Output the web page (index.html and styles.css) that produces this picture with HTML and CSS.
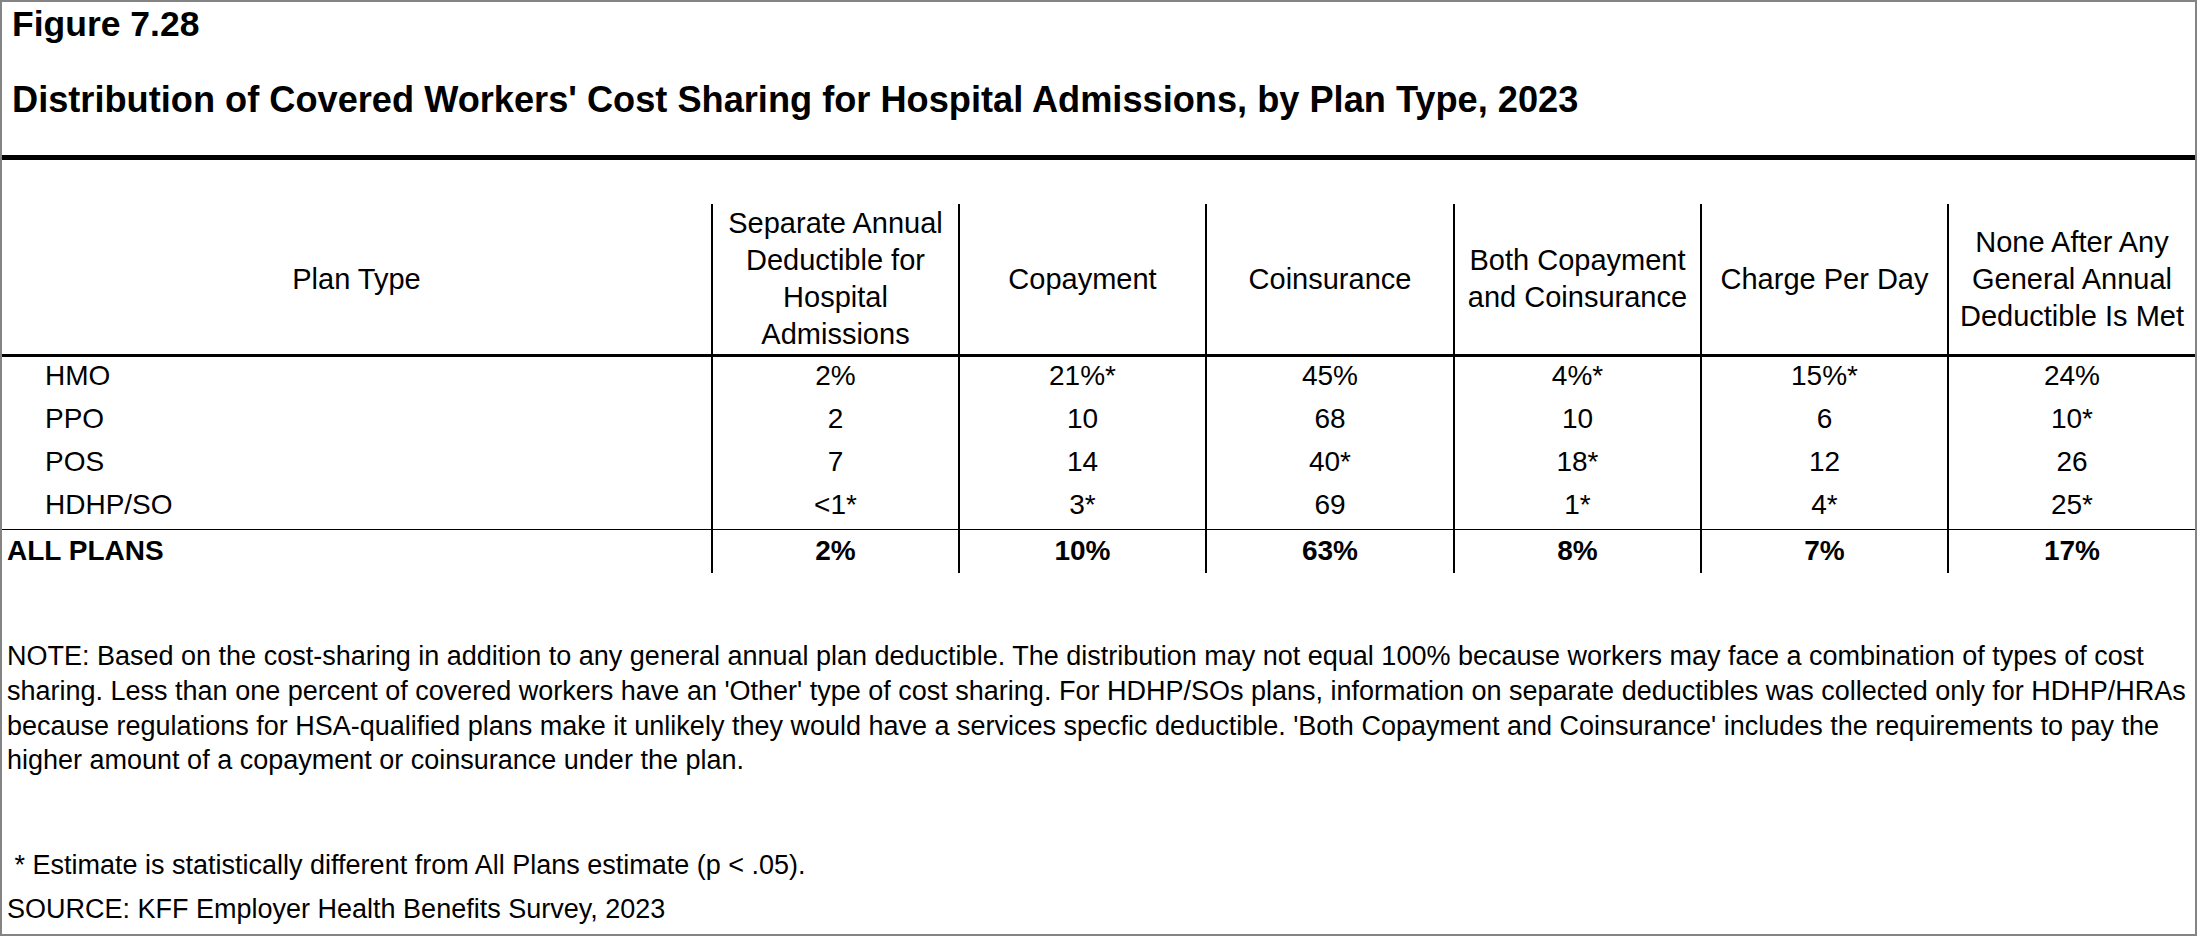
FILE: index.html
```html
<!DOCTYPE html>
<html lang="en">
<head>
<meta charset="utf-8">
<title>Figure 7.28</title>
<link rel="stylesheet" href="styles.css">
</head>
<body>
<div class="frame">
  <header class="head">
    <div class="fig">Figure 7.28</div>
    <h1 class="title">Distribution of Covered Workers' Cost Sharing for Hospital Admissions, by Plan Type, 2023</h1>
  </header>

  <div class="tbl">
    <div class="hc first">Plan Type</div>
    <div class="hc col">Separate Annual Deductible for Hospital Admissions</div>
    <div class="hc col">Copayment</div>
    <div class="hc col">Coinsurance</div>
    <div class="hc col">Both Copayment and Coinsurance</div>
    <div class="hc col">Charge Per Day</div>
    <div class="hc col">None After Any General Annual Deductible Is Met</div>

    <div class="c lab">HMO</div>
    <div class="c col">2%</div>
    <div class="c col">21%*</div>
    <div class="c col">45%</div>
    <div class="c col">4%*</div>
    <div class="c col">15%*</div>
    <div class="c col">24%</div>

    <div class="c lab">PPO</div>
    <div class="c col">2</div>
    <div class="c col">10</div>
    <div class="c col">68</div>
    <div class="c col">10</div>
    <div class="c col">6</div>
    <div class="c col">10*</div>

    <div class="c lab">POS</div>
    <div class="c col">7</div>
    <div class="c col">14</div>
    <div class="c col">40*</div>
    <div class="c col">18*</div>
    <div class="c col">12</div>
    <div class="c col">26</div>

    <div class="c lab">HDHP/SO</div>
    <div class="c col">&lt;1*</div>
    <div class="c col">3*</div>
    <div class="c col">69</div>
    <div class="c col">1*</div>
    <div class="c col">4*</div>
    <div class="c col">25*</div>

    <div class="c all alllab">ALL PLANS</div>
    <div class="c all col">2%</div>
    <div class="c all col">10%</div>
    <div class="c all col">63%</div>
    <div class="c all col">8%</div>
    <div class="c all col">7%</div>
    <div class="c all col">17%</div>
  </div>

  <div class="notes">
    <p class="note">NOTE: Based on the cost-sharing in addition to any general annual plan deductible. The distribution may not equal 100% because workers may face a combination of types of cost<br>sharing. Less than one percent of covered workers have an 'Other' type of cost sharing. For HDHP/SOs plans, information on separate deductibles was collected only for HDHP/HRAs<br>because regulations for HSA-qualified plans make it unlikely they would have a services specfic deductible. 'Both Copayment and Coinsurance' includes the requirements to pay the<br>higher amount of a copayment or coinsurance under the plan.</p>
    <p class="foot first-foot">&nbsp;* Estimate is statistically different from All Plans estimate (p &lt; .05).</p>
    <p class="foot">SOURCE: KFF Employer Health Benefits Survey, 2023</p>
  </div>
</div>
</body>
</html>
```

FILE: styles.css
```css
* {
  box-sizing: border-box;
}

body {
  margin: 0;
  background: #ffffff;
  color: #000000;
  font-family: "Liberation Sans", Arial, sans-serif;
}

.frame {
  width: 2197px;
  height: 936px;
  border: 2px solid #848484;
  overflow: hidden;
  background: #ffffff;
}

.head {
  padding: 2px 10px 35px;
  border-bottom: 5px solid #000000;
}

.fig,
.title {
  font-size: 35.5px;
  font-weight: 700;
  line-height: 40px;
  margin: 0;
  white-space: nowrap;
}

.title {
  margin-top: 36px;
  font-size: 36.2px;
}

.tbl {
  display: grid;
  grid-template-columns: 709px 247px 247px 248px 247px 247px 248px;
  margin-top: 44px;
  font-size: 28px;
}

.hc {
  height: 153px;
  border-bottom: 3px solid #000000;
  display: flex;
  align-items: center;
  justify-content: center;
  text-align: center;
  font-size: 29px;
  line-height: 37px;
  padding: 0 4px;
}

.col {
  border-left: 2px solid #000000;
}

.c {
  height: 43px;
  padding-top: 3px;
  line-height: 31px;
  text-align: center;
  white-space: nowrap;
}

.lab {
  text-align: left;
  padding-left: 43px;
}

.all {
  height: 44px;
  padding-top: 5px;
  border-top: 1px solid #000000;
  font-weight: 700;
}

.alllab {
  text-align: left;
  padding-left: 5px;
}

.notes {
  padding: 66px 5px 0;
  font-size: 27px;
}

.note {
  margin: 0;
  line-height: 34.8px;
  white-space: nowrap;
}

.foot {
  margin: 0;
  line-height: 44px;
  white-space: nowrap;
}

.first-foot {
  margin-top: 65px;
}
```
